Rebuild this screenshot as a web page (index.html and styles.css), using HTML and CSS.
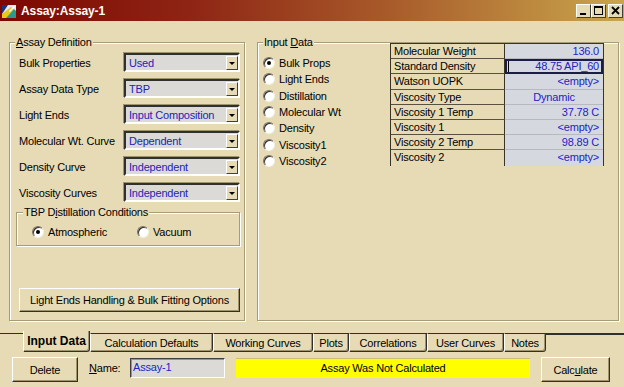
FILE: index.html
```html
<!DOCTYPE html>
<html lang="en">
<head>
    <meta charset="UTF-8">
    <title>Assay:Assay-1</title>
    <link rel="stylesheet" href="styles.css">
</head>
<body>
<div class="window">
    <div class="titlebar">
        <svg class="app-icon" width="14" height="13" viewBox="0 0 14 13">
            <rect x="0" y="0" width="14" height="13" fill="#e8e8f0"/>
            <polygon points="0,0 6,0 0,9" fill="#20307a"/>
            <polygon points="0,13 0,9 9,2 12,4 4,13" fill="#e8c818"/>
            <polygon points="4,13 12,4 14,6 14,13" fill="#2a9a8a"/>
            <polygon points="7,6 12,1 13,2 8,7" fill="#ffffff"/>
        </svg>
        <span class="title">Assay:Assay-1</span>
        <div class="controls">
            <span class="ctl">
                <svg width="13" height="11" viewBox="0 0 13 11"><rect x="3" y="8" width="6" height="2" fill="#000"/></svg>
            </span>
            <span class="ctl">
                <svg width="13" height="11" viewBox="0 0 13 11"><rect x="2.5" y="1.5" width="8" height="8" fill="none" stroke="#000"/><rect x="2" y="1" width="9" height="2" fill="#000"/></svg>
            </span>
            <span class="ctl close">
                <svg width="13" height="11" viewBox="0 0 13 11"><path d="M3 2 L10 9 M10 2 L3 9" stroke="#000" stroke-width="1.8"/></svg>
            </span>
        </div>
    </div>

    <div class="main">
        <fieldset class="group definition">
            <legend><u>A</u>ssay Definition</legend>
            <div class="field">
                <label>Bulk Properties</label>
                <div class="combo"><span>Used</span><i class="drop"></i></div>
            </div>
            <div class="field">
                <label>Assay Data Type</label>
                <div class="combo"><span>TBP</span><i class="drop"></i></div>
            </div>
            <div class="field">
                <label>Light Ends</label>
                <div class="combo"><span>Input Composition</span><i class="drop"></i></div>
            </div>
            <div class="field">
                <label>Molecular Wt. Curve</label>
                <div class="combo"><span>Dependent</span><i class="drop"></i></div>
            </div>
            <div class="field">
                <label>Density Curve</label>
                <div class="combo"><span>Independent</span><i class="drop"></i></div>
            </div>
            <div class="field">
                <label>Viscosity Curves</label>
                <div class="combo"><span>Independent</span><i class="drop"></i></div>
            </div>

            <fieldset class="group tbp">
                <legend>TBP D<u>i</u>stillation Conditions</legend>
                <div class="radio-row">
                    <span class="opt"><span class="radio on"></span>Atmospheric</span>
                    <span class="opt"><span class="radio"></span>Vacuum</span>
                </div>
            </fieldset>

            <button class="btn wide">Light Ends Handling &amp; Bulk Fitting Options</button>
        </fieldset>

        <fieldset class="group input-data">
            <legend>Input <u>D</u>ata</legend>
            <div class="input-body">
                <div class="radio-list">
                    <div class="opt"><span class="radio on"></span>Bulk Props</div>
                    <div class="opt"><span class="radio"></span>Light Ends</div>
                    <div class="opt"><span class="radio"></span>Distillation</div>
                    <div class="opt"><span class="radio"></span>Molecular Wt</div>
                    <div class="opt"><span class="radio"></span>Density</div>
                    <div class="opt"><span class="radio"></span>Viscosity1</div>
                    <div class="opt"><span class="radio"></span>Viscosity2</div>
                </div>
                <div class="grid">
                    <div class="row"><span class="key">Molecular Weight</span><span class="val">136.0</span></div>
                    <div class="row"><span class="key">Standard Density</span><span class="val active"><i class="caret"></i>48.75 API_60</span></div>
                    <div class="row"><span class="key">Watson UOPK</span><span class="val">&lt;empty&gt;</span></div>
                    <div class="row"><span class="key">Viscosity Type</span><span class="val center">Dynamic</span></div>
                    <div class="row"><span class="key">Viscosity 1 Temp</span><span class="val">37.78 C</span></div>
                    <div class="row"><span class="key">Viscosity 1</span><span class="val">&lt;empty&gt;</span></div>
                    <div class="row"><span class="key">Viscosity 2 Temp</span><span class="val">98.89 C</span></div>
                    <div class="row"><span class="key">Viscosity 2</span><span class="val">&lt;empty&gt;</span></div>
                </div>
            </div>
        </fieldset>
    </div>

    <div class="tabs">
        <span class="tab-edge"></span>
        <span class="tab selected">Input Data</span>
        <span class="tab">Calculation Defaults</span>
        <span class="tab">Working Curves</span>
        <span class="tab">Plots</span>
        <span class="tab">Correlations</span>
        <span class="tab">User Curves</span>
        <span class="tab">Notes</span>
        <span class="tab-fill"></span>
    </div>

    <div class="footer">
        <button class="btn delete">Delete</button>
        <span class="name-label"><u>N</u>ame:</span>
        <div class="name-box">Assay-1</div>
        <div class="status">Assay Was Not Calculated</div>
        <button class="btn calculate">Calc<u>u</u>late</button>
    </div>
</div>
</body>
</html>
```

FILE: styles.css
```css
* {
    box-sizing: border-box;
}

body {
    margin: 0;
    background-color: #e7dbb6;
    font-family: "Liberation Sans", Arial, sans-serif;
    font-size: 11px;
    letter-spacing: -0.2px;
    color: #000;
}

u {
    text-decoration: underline;
    text-underline-offset: 1px;
}

.window {
    width: 624px;
    height: 387px;
    overflow: hidden;
}

/* Title bar */
.titlebar {
    height: 21px;
    display: flex;
    align-items: center;
    padding-left: 2px;
    background: linear-gradient(90deg, #7c0800 0%, #8e2414 30%, #a85a2a 62%, #c9a64c 100%);
}

.app-icon {
    margin-top: 1px;
}

.title {
    margin-left: 5px;
    color: #fff;
    font-weight: bold;
    font-size: 12px;
    letter-spacing: -0.1px;
}

.controls {
    margin-left: auto;
    display: flex;
    padding-right: 1px;
}

.ctl {
    width: 15px;
    height: 14px;
    display: flex;
    align-items: center;
    justify-content: center;
    background-color: #e7dbb6;
    border: 1px solid;
    border-color: #fff #404040 #404040 #fff;
}

.ctl.close {
    margin-left: 2px;
}

/* Group boxes */
.main {
    display: flex;
    gap: 12px;
    padding: 15px 0 0 9px;
}

.group {
    margin: 0;
    min-width: 0;
    border: 1px solid #a89c78;
    box-shadow: 1px 1px 0 #fff, inset 1px 1px 0 #fff;
}

.group legend {
    padding: 0 1px;
    line-height: 13px;
    background-color: #e7dbb6;
}

.definition {
    width: 236px;
    height: 285px;
    flex-shrink: 0;
    padding: 4px 4px 8px 5px;
    display: flex;
    flex-direction: column;
}

.field {
    display: flex;
    align-items: center;
    margin: 0 0 7px 4px;
}

.field label {
    width: 105px;
    flex-shrink: 0;
}

.combo {
    flex: 1;
    min-width: 0;
    height: 19px;
    display: flex;
    align-items: center;
    background-color: #dcdad6;
    border: 2px solid;
    border-color: #303030 #fff #fff #303030;
    box-shadow: -1px -1px 0 #a09470;
    color: #2222b8;
    padding-left: 3px;
}

.combo span {
    flex: 1;
    white-space: nowrap;
}

.drop {
    width: 12px;
    height: 14px;
    flex-shrink: 0;
    background-color: #e7dbb6;
    border: 1px solid;
    border-color: #fff #404040 #404040 #fff;
    position: relative;
}

.drop::after {
    content: "";
    position: absolute;
    left: 2px;
    top: 5px;
    border-left: 3px solid transparent;
    border-right: 3px solid transparent;
    border-top: 3px solid #000;
}

.tbp {
    margin: -3px 0 0 1px;
    padding: 7px 6px 7px 6px;
}

.radio-row {
    display: flex;
    padding-left: 9px;
}

.radio-row .opt:first-child {
    width: 105px;
}

.opt {
    display: flex;
    align-items: center;
}

.radio {
    width: 12px;
    height: 12px;
    margin-right: 4px;
    border-radius: 50%;
    background-color: #fff;
    border: 1px solid;
    border-color: #7a7060 #f4f0e4 #f4f0e4 #7a7060;
    box-shadow: inset 1px 1px 0 #303030;
    position: relative;
    flex-shrink: 0;
}

.radio.on::after {
    content: "";
    position: absolute;
    left: 3px;
    top: 3px;
    width: 4px;
    height: 4px;
    border-radius: 50%;
    background-color: #000;
}

/* Buttons */
.btn {
    font-family: inherit;
    font-size: 11px;
    letter-spacing: -0.2px;
    color: #000;
    background-color: #e7dbb6;
    border: 1px solid;
    border-color: #fff #303030 #303030 #fff;
    box-shadow: inset -1px -1px 0 #a09470;
    padding: 0;
}

.wide {
    margin: auto 0 0 4px;
    height: 24px;
}

/* Input data */
.input-data {
    width: 362px;
    height: 285px;
    flex-shrink: 0;
    padding: 6px 14px 8px 5px;
}

.input-body {
    display: flex;
    align-items: flex-start;
}

.radio-list {
    width: 127px;
    flex-shrink: 0;
}

.radio-list .opt {
    height: 16.33px;
}

.grid {
    width: 214px;
    margin-top: -12px;
    border: 1px solid #3a3428;
    border-bottom: none;
}

.row {
    display: flex;
    height: 15.2px;
    line-height: 14px;
}

.key {
    width: 114px;
    padding-left: 3px;
    border-right: 1px solid #3a3428;
    border-bottom: 1px solid #5a5040;
    white-space: nowrap;
}

.row:last-child .key {
    border-bottom: none;
}

.val {
    flex: 1;
    text-align: right;
    padding-right: 4px;
    color: #2222c8;
    background-color: #d6d8e0;
    border-bottom: 1px solid #b8b8c0;
    position: relative;
}

.row:last-child .val {
    border-bottom: none;
}

.val.center {
    text-align: center;
    padding-right: 0;
}

.val.active {
    border: 2px solid #1c1c48;
    line-height: 11px;
    padding-right: 2px;
}

.caret {
    position: absolute;
    left: 1px;
    top: 0;
    width: 1px;
    height: 11px;
    background-color: #000;
}

/* Tabs */
.tabs {
    display: flex;
    align-items: flex-start;
    height: 22px;
    margin-top: 10px;
}

.tab-edge {
    width: 23px;
    margin-top: 2px;
    border-top: 1px solid #303030;
}

.tab-fill {
    flex: 1;
    margin-top: 2px;
    border-top: 2px solid #303030;
}

.tab {
    height: 19px;
    margin-top: 2px;
    display: flex;
    align-items: center;
    justify-content: center;
    border-top: 1px solid #303030;
    border-left: 1px solid #fff;
    border-right: 1px solid #303030;
    border-bottom: 1px solid #303030;
    border-bottom-right-radius: 3px;
    box-shadow: inset -1px -1px 0 #a09470;
}

.tab.selected {
    height: 21px;
    margin-top: 0;
    border-top: none;
    font-weight: bold;
    font-size: 12px;
    letter-spacing: 0;
}

.tab:nth-child(2) { width: 67px; }
.tab:nth-child(3) { width: 123px; }
.tab:nth-child(4) { width: 100px; }
.tab:nth-child(5) { width: 36px; }
.tab:nth-child(6) { width: 78px; }
.tab:nth-child(7) { width: 77px; }
.tab:nth-child(8) { width: 42px; }

/* Footer row */
.footer {
    display: flex;
    align-items: flex-start;
    margin-top: 4px;
    padding-left: 12px;
}

.delete {
    width: 66px;
    height: 25px;
}

.name-label {
    width: 41px;
    margin-left: 11px;
    line-height: 22px;
}

.name-box {
    width: 95px;
    height: 20px;
    margin-top: 1px;
    padding-left: 2px;
    line-height: 16px;
    color: #2222c8;
    background-color: #dcdad6;
    border: 1px solid;
    border-color: #404040 #fff #fff #404040;
    box-shadow: inset 1px 1px 0 #a09470;
}

.status {
    width: 294px;
    height: 20px;
    margin: 1px 0 0 11px;
    text-align: center;
    line-height: 18px;
    background-color: #ffff00;
    border-top: 1px solid #c8c070;
}

.calculate {
    width: 69px;
    height: 25px;
    margin-left: 11px;
}
```
